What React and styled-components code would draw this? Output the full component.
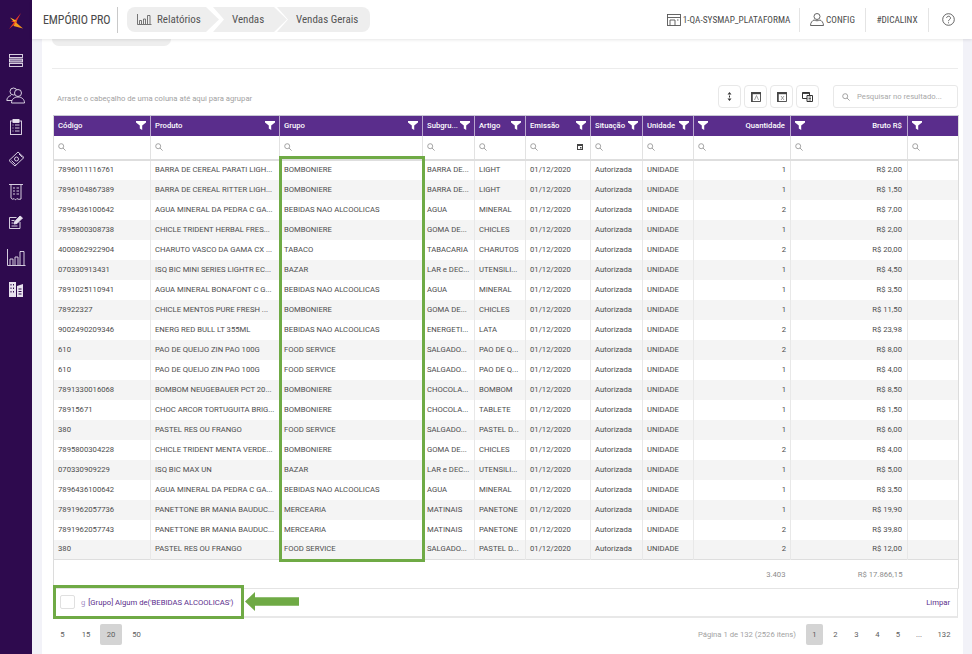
import React from "react";
import styled, { createGlobalStyle } from "styled-components";

const GlobalStyle = createGlobalStyle`
  html, body { margin: 0; padding: 0; height: 654px; overflow: hidden; background: #fff; }
  body { font-family: Roboto, "Liberation Sans", sans-serif; }
  * { box-sizing: border-box; }
`;

const ROWS = [
  ["7896011116761", "BARRA DE CEREAL PARATI LIGH...", "BOMBONIERE", "BARRA DE...", "LIGHT", 1, "2,00"],
  ["7896104867389", "BARRA DE CEREAL RITTER LIGH...", "BOMBONIERE", "BARRA DE...", "LIGHT", 1, "1,50"],
  ["7896436100642", "AGUA MINERAL DA PEDRA C GA...", "BEBIDAS NAO ALCOOLICAS", "AGUA", "MINERAL", 2, "7,00"],
  ["7895800308738", "CHICLE TRIDENT HERBAL FRES...", "BOMBONIERE", "GOMA DE...", "CHICLES", 1, "2,00"],
  ["4000862922904", "CHARUTO VASCO DA GAMA CX ...", "TABACO", "TABACARIA", "CHARUTOS", 2, "20,00"],
  ["070330913431", "ISQ BIC MINI SERIES LIGHTR EC...", "BAZAR", "LAR e DEC...", "UTENSILI...", 1, "4,50"],
  ["7891025110941", "AGUA MINERAL BONAFONT C G...", "BEBIDAS NAO ALCOOLICAS", "AGUA", "MINERAL", 1, "3,50"],
  ["78922327", "CHICLE MENTOS PURE FRESH ...", "BOMBONIERE", "GOMA DE...", "CHICLES", 1, "11,50"],
  ["9002490209346", "ENERG RED BULL LT 355ML", "BEBIDAS NAO ALCOOLICAS", "ENERGETI...", "LATA", 2, "23,98"],
  ["610", "PAO DE QUEIJO ZIN PAO 100G", "FOOD SERVICE", "SALGADO...", "PAO DE Q...", 2, "8,00"],
  ["610", "PAO DE QUEIJO ZIN PAO 100G", "FOOD SERVICE", "SALGADO...", "PAO DE Q...", 1, "4,00"],
  ["7891330016068", "BOMBOM NEUGEBAUER PCT 20...", "BOMBONIERE", "CHOCOLA...", "BOMBOM", 1, "8,50"],
  ["78915671", "CHOC ARCOR TORTUGUITA BRIG...", "BOMBONIERE", "CHOCOLA...", "TABLETE", 1, "1,50"],
  ["380", "PASTEL RES OU FRANGO", "FOOD SERVICE", "SALGADO...", "PASTEL D...", 1, "6,00"],
  ["7895800304228", "CHICLE TRIDENT MENTA VERDE...", "BOMBONIERE", "GOMA DE...", "CHICLES", 2, "4,00"],
  ["070330909229", "ISQ BIC MAX UN", "BAZAR", "LAR e DEC...", "UTENSILI...", 1, "5,00"],
  ["7896436100642", "AGUA MINERAL DA PEDRA C GA...", "BEBIDAS NAO ALCOOLICAS", "AGUA", "MINERAL", 1, "3,50"],
  ["7891962057736", "PANETTONE BR MANIA BAUDUC...", "MERCEARIA", "MATINAIS", "PANETONE", 1, "19,90"],
  ["7891962057743", "PANETTONE BR MANIA BAUDUC...", "MERCEARIA", "MATINAIS", "PANETONE", 2, "39,80"],
  ["380", "PASTEL RES OU FRANGO", "FOOD SERVICE", "SALGADO...", "PASTEL D...", 2, "12,00"],
];

const COLUMNS = [
  { title: "Código", width: 97, filter: "right" },
  { title: "Produto", width: 129, filter: "right" },
  { title: "Grupo", width: 143, filter: "right" },
  { title: "Subgru...", width: 52, filter: "right" },
  { title: "Artigo", width: 51, filter: "right" },
  { title: "Emissão", width: 65, filter: "right", date: true },
  { title: "Situação", width: 52, filter: "right" },
  { title: "Unidade", width: 51, filter: "right" },
  { title: "Quantidade", width: 97, filter: "left", end: true },
  { title: "Bruto R$", width: 117, filter: "left", end: true },
  { title: "", width: 51, filter: "left" },
];

const Page = styled.div`
  display: flex;
  width: 972px;
  height: 654px;
`;

const Sidebar = styled.nav`
  width: 32px;
  flex: none;
  background: #2e0a4e;
  display: flex;
  flex-direction: column;
  align-items: center;
  padding-top: 13px;
`;

const SideIcon = styled.div`
  height: 18px;
  margin-top: ${(p) => p.$gap}px;
  display: flex;
  align-items: center;
  justify-content: center;
`;

const Main = styled.div`
  flex: 1;
  min-width: 0;
  display: flex;
  flex-direction: column;
  background: #f2f2f8;
`;

const Header = styled.header`
  height: 39px;
  flex: none;
  background: #fff;
  display: flex;
  align-items: center;
  box-shadow: 0 1px 3px rgba(0, 0, 0, 0.1);
  position: relative;
  z-index: 2;
  font-stretch: 75%;
  color: #4a4a4a;
`;

const Brand = styled.div`
  width: 75px;
  height: 26px;
  margin-left: 11px;
  display: flex;
  align-items: center;
  font-size: 12px;
  letter-spacing: -0.1px;
  white-space: nowrap;
  border-right: 1px solid #c9c9c9;
`;

const Crumbs = styled.div`
  display: flex;
  margin-left: 9px;
`;

const Crumb = styled.div`
  height: 25px;
  width: ${(p) => p.$width}px;
  margin-left: ${(p) => p.$overlap}px;
  padding-left: ${(p) => p.$pad}px;
  display: flex;
  align-items: center;
  gap: 5px;
  font-size: 11px;
  white-space: nowrap;
  background: #eeeeee;
  color: #555;
  clip-path: ${(p) =>
    p.$first
      ? "polygon(0 0, calc(100% - 13px) 0, 100% 50%, calc(100% - 13px) 100%, 0 100%)"
      : p.$last
      ? "polygon(0 0, 100% 0, 100% 100%, 0 100%, 11px 50%)"
      : "polygon(0 0, calc(100% - 13px) 0, 100% 50%, calc(100% - 13px) 100%, 0 100%, 11px 50%)"};
  border-radius: ${(p) => (p.$first ? "8px 0 0 8px" : p.$last ? "0 8px 8px 0" : "0")};
`;

const HeaderRight = styled.div`
  margin-left: auto;
  display: flex;
  align-items: center;
  height: 100%;
`;

const HeaderItem = styled.div`
  height: 24px;
  width: ${(p) => p.$width}px;
  padding-right: ${(p) => p.$right || 0}px;
  display: flex;
  align-items: center;
  justify-content: ${(p) => p.$align || "center"};
  gap: 2px;
  font-size: 9.3px;
  color: #4a4a4a;
  border-right: ${(p) => (p.$sep ? "1px solid #e4e4e4" : "0")};
  white-space: nowrap;
`;

const Content = styled.main`
  flex: 1;
  min-height: 0;
  margin: 0 9px 0 10px;
  padding: 0 5px 0 11px;
  background: #fff;
  display: flex;
  flex-direction: column;
  color: #555;
`;

const CutCard = styled.div`
  width: 119px;
  height: 7px;
  margin-left: -1px;
  background: #eeeeee;
  border-radius: 0 0 8px 8px;
  flex: none;
`;

const Rule = styled.div`
  height: 1px;
  margin: 22px 0 0 -1px;
  background: #ececec;
  flex: none;
`;

const Toolbar = styled.div`
  height: 23px;
  margin-top: 16px;
  display: flex;
  align-items: center;
  flex: none;
`;

const GroupHint = styled.span`
  font-size: 7.7px;
  color: #a2a2a2;
  margin-left: 4px;
  margin-right: auto;
  padding-top: 3px;
`;

const ToolButton = styled.button`
  width: 23px;
  height: 23px;
  margin-left: ${(p) => p.$gap || 3}px;
  padding: 0;
  background: #fff;
  border: 1px solid #e8e8e8;
  border-radius: 4px;
  display: flex;
  align-items: center;
  justify-content: center;
`;

const SearchBox = styled.div`
  width: 125px;
  height: 23px;
  margin-left: 14px;
  padding-left: 8px;
  border: 1px solid #e8e8e8;
  border-radius: 3px;
  display: flex;
  align-items: center;
  gap: 7px;
  font-size: 7.7px;
  color: #a8a8a8;
`;

const GridWrap = styled.div`
  position: relative;
  margin-top: 7px;
  flex: none;
`;

const Table = styled.table`
  width: 905px;
  table-layout: fixed;
  border-collapse: collapse;
  font-size: 7.7px;
  border-left: 1px solid #dcdcdc;
  border-right: 1px solid #dcdcdc;
`;

const HeadCell = styled.th`
  height: 20px;
  padding: 0 ${(p) => (p.$end ? 5 : 4)}px 0 4px;
  background: #5a2d8c;
  color: #fff;
  font-weight: 500;
  border-left: 1px solid #b9a6cf;
  border-top: 1px solid #c8c8d4;
  overflow: hidden;
  &:first-child { border-left: 0; }
`;

const HeadInner = styled.div`
  display: flex;
  align-items: center;
  justify-content: space-between;
  flex-direction: ${(p) => (p.$left ? "row-reverse" : "row")};
  white-space: nowrap;
`;

const FilterCell = styled.td`
  height: 24px;
  padding: 0 4px;
  background: #fff;
  border-left: 1px solid #e2e2e2;
  border-bottom: 2px solid #dedede;
  &:first-child { border-left: 0; }
`;

const FilterInner = styled.div`
  display: flex;
  align-items: center;
  justify-content: space-between;
`;

const Row = styled.tr`
  background: ${(p) => (p.$odd ? "#f4f4f4" : "#fff")};
`;

const Cell = styled.td`
  height: 20px;
  padding: 0 ${(p) => p.$right || 4}px 1px 4px;
  color: #4c4c4c;
  border-left: 1px solid #e8e8e8;
  white-space: nowrap;
  overflow: hidden;
  text-align: ${(p) => (p.$end ? "right" : "left")};
  &:first-child { border-left: 0; }
`;

const TotalCell = styled.td`
  height: 29px;
  padding: 0 5px 0 4px;
  color: #8c8c8c;
  border-top: 1px solid #dedede;
  border-bottom: 1px solid #e4e4e4;
  text-align: right;
`;

const GroupOutline = styled.div`
  position: absolute;
  left: 226px;
  top: 41px;
  width: 146px;
  height: 406px;
  border: 3px solid #6faa45;
  pointer-events: none;
`;

const FilterBar = styled.div`
  position: relative;
  height: 29px;
  padding: 0 7px 1px 6px;
  display: flex;
  align-items: center;
  font-size: 7.7px;
  border: 1px solid #e4e4e4;
  border-top: 0;
  border-bottom: 2px solid #e8e8e8;
  flex: none;
`;

const CheckBox = styled.span`
  width: 15px;
  height: 14px;
  background: #fff;
  border: 1px solid #e0e0e0;
  border-radius: 2px;
  margin-right: 6px;
`;

const FilterIconText = styled.span`
  color: #a58fc4;
  margin-right: 3px;
`;

const FilterText = styled.span`
  color: #5a2d8c;
`;

const ClearLink = styled.span`
  margin-left: auto;
  color: #5a2d8c;
`;

const FilterOutline = styled.div`
  position: absolute;
  left: -1px;
  top: -4px;
  width: 191px;
  height: 34px;
  border: 3px solid #6faa45;
  pointer-events: none;
`;

const ArrowMark = styled.svg`
  position: absolute;
  left: 191px;
  top: 3px;
`;

const Pager = styled.div`
  height: 21px;
  margin-top: 6px;
  display: flex;
  align-items: center;
  font-size: 7.7px;
  color: #5c5c5c;
  flex: none;
`;

const PageButton = styled.span`
  height: 21px;
  width: ${(p) => p.$width}px;
  margin-right: ${(p) => p.$after || 0}px;
  display: flex;
  align-items: center;
  justify-content: center;
  border-radius: 2px;
  background: ${(p) => (p.$active ? "#d4d4d4" : "transparent")};
`;

const PageInfo = styled.span`
  margin-left: auto;
  margin-right: 10px;
  color: #a2a2a2;
`;

const Funnel = () => (
  <svg width="10" height="9" viewBox="0 0 10 9" style={{ flex: "none" }}>
    <path d="M0 0h10v1.400L6.200 4.600V9L3.800 7.600v-3L0 1.400z" fill="#fff" />
  </svg>
);

const Lens = () => (
  <svg width="8" height="8" viewBox="0 0 8 8" fill="none" stroke="#8e8e8e" strokeWidth=".8" style={{ display: "block", flex: "none" }}>
    <circle cx="3.200" cy="3.200" r="2.500" />
    <path d="M5 5l2.600 2.600" />
  </svg>
);

const DateIcon = () => (
  <svg width="6" height="6" viewBox="0 0 6 6" style={{ marginRight: 3, flex: "none" }}>
    <path d="M0 0h6v6H0z" fill="#444" />
    <path d="M1 2h4v3H1z" fill="#fff" />
    <path d="M3 3h1.500v1.500H3z" fill="#444" />
  </svg>
);

const Logo = () => (
  <svg width="14" height="16" viewBox="0 0 14 16" style={{ flex: "none" }}>
    <path d="M12 0L6.500 6.500 2 8.800l5 .7z" fill="#e2352a" />
    <path d="M1 4.500L8 8 6 10z" fill="#f9b81f" />
    <path d="M0 16L6 8l2 1.200z" fill="#ee3d24" />
    <path d="M6.500 9L14 15.500 4.500 13z" fill="#f59a1c" />
  </svg>
);

const SIDE_STROKE = { fill: "none", stroke: "#e8e2ee", strokeWidth: 0.9 };

const SideMenu = () => (
  <svg width="14" height="13" viewBox="0 0 14 13" {...SIDE_STROKE}>
    <rect x=".5" y=".5" width="13" height="3" />
    <rect x=".5" y="5" width="13" height="3" fill="#8d7aa3" />
    <rect x=".5" y="9.500" width="13" height="3" />
  </svg>
);

const SideUsers = () => (
  <svg width="20" height="17" viewBox="0 0 20 17" {...SIDE_STROKE}>
    <circle cx="7.500" cy="4.500" r="3.500" />
    <circle cx="12" cy="6" r="3.500" fill="#2e0a4e" />
    <path d="M5 8.500C2 9.500 1 11 .8 13.500H6" />
    <path d="M5.500 16c0-3.500 2.500-6 6.500-6s6.500 2.500 6.500 6z" fill="#2e0a4e" />
  </svg>
);

const SideClipboard = () => (
  <svg width="12" height="16" viewBox="0 0 12 16" {...SIDE_STROKE}>
    <rect x=".5" y="2" width="11" height="13.500" />
    <rect x="3" y=".5" width="6" height="3" fill="#e8e2ee" />
    <path d="M2.500 6h1M5 6h4.500M2.500 9h1M5 9h4.500M2.500 12h1M5 12h4.500" />
  </svg>
);

const SideTag = () => (
  <svg width="17" height="16" viewBox="0 0 17 16" {...SIDE_STROKE}>
    <path d="M1 9.500L10 1l6 5.500L7 15z" />
    <circle cx="8.500" cy="8" r="2" />
    <path d="M3.500 9.500l4 4M11 3l3.500 3.500" />
  </svg>
);

const SideReceipt = () => (
  <svg width="14" height="17" viewBox="0 0 14 17" {...SIDE_STROKE}>
    <path d="M0 .5h14M2 .5v13.500c1 1.500 2 1.500 3 .5 1 1.500 2 1.500 3 0 1 1 2.500 1 4 .5V.5" />
    <path d="M4 4h2M7.500 4h2.500M4 7h2M7.500 7h2.500M4 10h2M7.500 10h2.500" />
  </svg>
);

const SideEdit = () => (
  <svg width="14" height="14" viewBox="0 0 14 14" {...SIDE_STROKE}>
    <path d="M11 7v6.500H.5V2.500h7" />
    <path d="M5 9l.8-2.500L11 1l2.500 2L8 8.500z" fill="#e8e2ee" />
    <path d="M2.500 5.500h3M2.500 8h2M2.500 11h6" />
  </svg>
);

const SideChart = () => (
  <svg width="19" height="17" viewBox="0 0 19 17" {...SIDE_STROKE}>
    <path d="M.5 0v16.500h18" />
    <path d="M3 16V10h3v6M8 16V8h3v8M13 16V2.500h4V16" />
  </svg>
);

const SideBuildings = () => (
  <svg width="16" height="17" viewBox="0 0 16 17" fill="#e8e2ee">
    <path d="M1 2h7v15H1zM9 6l6-2v13H9z" />
    <path d="M2.500 4h1v1.500h-1zM5 4h1v1.500H5zM2.500 7.500h1V9h-1zM5 7.500h1V9H5zM2.500 11h1v1.500h-1zM5 11h1v1.500H5zM10.500 8.500h3v1h-3zM10.500 11h3v1h-3zM10.500 13.500h3v1h-3z" fill="#2e0a4e" />
  </svg>
);

const ChartIcon = () => (
  <svg width="15" height="11" viewBox="0 0 15 11" fill="none" stroke="#555" strokeWidth=".8" style={{ flex: "none" }}>
    <path d="M.5 0v10.500h14" />
    <path d="M2.500 10V6.500h2V10M6.500 10V5h2v5M10.500 10V1.500h2.500V10" />
  </svg>
);

const StoreIcon = () => (
  <svg width="14" height="12" viewBox="0 0 14 12" fill="none" stroke="#555" strokeWidth=".9" style={{ flex: "none" }}>
    <rect x=".5" y=".5" width="13" height="11" />
    <path d="M.5 3.500h13M3 11.500V6h5v5.500M10 6h1.500" />
  </svg>
);

const UserIcon = () => (
  <svg width="14" height="13" viewBox="0 0 14 13" fill="none" stroke="#555" strokeWidth=".9" style={{ flex: "none" }}>
    <circle cx="7" cy="3.500" r="3" />
    <path d="M.5 12.500c0-3 2-5 3.500-5.500 1.800 1 4.200 1 6 0 1.500.5 3.500 2.500 3.500 5.500z" />
  </svg>
);

const HelpIcon = () => (
  <svg width="13" height="13" viewBox="0 0 13 13" fill="none" stroke="#555" strokeWidth=".9">
    <circle cx="6.500" cy="6.500" r="5.800" />
    <path d="M4.600 5c.2-2.400 3.900-2.300 3.900 0 0 1.500-2 1.500-2 3.200M6.500 9.300v1" />
  </svg>
);

const SortIcon = () => (
  <svg width="5" height="9" viewBox="0 0 5 9" fill="#333">
    <path d="M2.500 0L4.500 2.500H.5zM2.500 9L.5 6.500h4zM2 3.500h1v2H2z" />
  </svg>
);

const ExportIcon = ({ letter }) => (
  <svg width="10" height="10" viewBox="0 0 10 10" fill="none" stroke="#444">
    <path d="M.5.500h9v9h-9z" strokeWidth=".9" />
    <path d="M0 1.200h10" strokeWidth="2" />
    <path d="M1 0v10" strokeWidth="1.500" />
    {letter === "A" ? <path d="M3.500 8l2-4.500L7.500 8" strokeWidth=".8" stroke="#888" /> : <path d="M4 4l3 4M7 4L4 8" strokeWidth=".8" stroke="#888" />}
  </svg>
);

const ColumnsIcon = () => (
  <svg width="11" height="10" viewBox="0 0 11 10" fill="none" stroke="#333">
    <path d="M.5.500h7v6h-7z" />
    <path d="M.5 1.200h7" strokeWidth="1.400" />
    <path d="M5 3.500h5.500v6H5z" fill="#fff" />
    <path d="M6.500 5h2.500M6.500 6.500h2.500M6.500 8h2.500" strokeWidth=".8" />
  </svg>
);

export default function App() {
  return (
    <Page>
      <GlobalStyle />
      <Sidebar>
        <Logo />
        <SideIcon $gap={22}><SideMenu /></SideIcon>
        <SideIcon $gap={17}><SideUsers /></SideIcon>
        <SideIcon $gap={14}><SideClipboard /></SideIcon>
        <SideIcon $gap={14}><SideTag /></SideIcon>
        <SideIcon $gap={15}><SideReceipt /></SideIcon>
        <SideIcon $gap={12}><SideEdit /></SideIcon>
        <SideIcon $gap={17}><SideChart /></SideIcon>
        <SideIcon $gap={13}><SideBuildings /></SideIcon>
      </Sidebar>
      <Main>
        <Header>
          <Brand>EMPÓRIO PRO</Brand>
          <Crumbs>
            <Crumb $first $width={92} $overlap={0} $pad={10}><ChartIcon />Relatórios</Crumb>
            <Crumb $width={74} $overlap={-6} $pad={19}>Vendas</Crumb>
            <Crumb $last $width={93} $overlap={-10} $pad={19}>Vendas Gerais</Crumb>
          </Crumbs>
          <HeaderRight>
            <HeaderItem $width={136} $right={6} $sep><StoreIcon />1-QA-SYSMAP_PLATAFORMA</HeaderItem>
            <HeaderItem $width={66} $sep><UserIcon />CONFIG</HeaderItem>
            <HeaderItem $width={63} $sep>#DICALINX</HeaderItem>
            <HeaderItem $width={43} $align="flex-end" $right={17}><HelpIcon /></HeaderItem>
          </HeaderRight>
        </Header>
        <Content>
          <CutCard />
          <Rule />
          <Toolbar>
            <GroupHint>Arraste o cabeçalho de uma coluna até aqui para agrupar</GroupHint>
            <ToolButton><SortIcon /></ToolButton>
            <ToolButton><ExportIcon letter="A" /></ToolButton>
            <ToolButton><ExportIcon letter="X" /></ToolButton>
            <ToolButton><ColumnsIcon /></ToolButton>
            <SearchBox><Lens />Pesquisar no resultado...</SearchBox>
          </Toolbar>
          <GridWrap>
            <Table>
              <colgroup>
                {COLUMNS.map((c, i) => <col key={i} width={c.width} />)}
              </colgroup>
              <thead>
                <tr>
                  {COLUMNS.map((c, i) => (
                    <HeadCell key={i} $end={c.end}>
                      <HeadInner $left={c.filter === "left"}>
                        <span>{c.title}</span>
                        <Funnel />
                      </HeadInner>
                    </HeadCell>
                  ))}
                </tr>
                <tr>
                  {COLUMNS.map((c, i) => (
                    <FilterCell key={i}>
                      <FilterInner>
                        <Lens />
                        {c.date && <DateIcon />}
                      </FilterInner>
                    </FilterCell>
                  ))}
                </tr>
              </thead>
              <tbody>
                {ROWS.map((r, i) => (
                  <Row key={i} $odd={i % 2 === 1}>
                    <Cell>{r[0]}</Cell>
                    <Cell>{r[1]}</Cell>
                    <Cell>{r[2]}</Cell>
                    <Cell>{r[3]}</Cell>
                    <Cell>{r[4]}</Cell>
                    <Cell>01/12/2020</Cell>
                    <Cell>Autorizada</Cell>
                    <Cell>UNIDADE</Cell>
                    <Cell $end>{r[5]}</Cell>
                    <Cell $end $right={5}>R$ {r[6]}</Cell>
                    <Cell />
                  </Row>
                ))}
                <tr>
                  <TotalCell colSpan={8} />
                  <TotalCell>3.403</TotalCell>
                  <TotalCell>R$ 17.866,15</TotalCell>
                  <TotalCell />
                </tr>
              </tbody>
            </Table>
            <GroupOutline />
          </GridWrap>
          <FilterBar>
            <CheckBox />
            <FilterIconText>g</FilterIconText>
            <FilterText>[Grupo] Algum de('BEBIDAS ALCOOLICAS')</FilterText>
            <ClearLink>Limpar</ClearLink>
            <FilterOutline />
            <ArrowMark width="54" height="19" viewBox="0 0 54 19">
              <path d="M0 9.500L10 0v5.200h44v8.600H10V19z" fill="#6faa45" />
            </ArrowMark>
          </FilterBar>
          <Pager>
            <PageButton $width={19}>5</PageButton>
            <PageButton $width={28}>15</PageButton>
            <PageButton $width={22} $active>20</PageButton>
            <PageButton $width={29}>50</PageButton>
            <PageInfo>Página 1 de 132 (2526 itens)</PageInfo>
            <PageButton $width={17} $after={2} $active>1</PageButton>
            <PageButton $width={21}>2</PageButton>
            <PageButton $width={21}>3</PageButton>
            <PageButton $width={21}>4</PageButton>
            <PageButton $width={20}>5</PageButton>
            <PageButton $width={22}>...</PageButton>
            <PageButton $width={28}>132</PageButton>
          </Pager>
        </Content>
      </Main>
    </Page>
  );
}
